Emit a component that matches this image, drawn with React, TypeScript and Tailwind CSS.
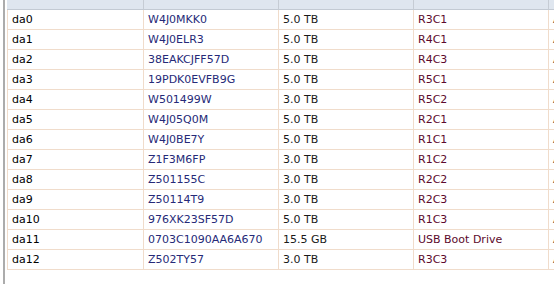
const rows = [
  ["da0", "W4J0MKK0", "5.0 TB", "R3C1"],
  ["da1", "W4J0ELR3", "5.0 TB", "R4C1"],
  ["da2", "38EAKCJFF57D", "5.0 TB", "R4C3"],
  ["da3", "19PDK0EVFB9G", "5.0 TB", "R5C1"],
  ["da4", "W501499W", "3.0 TB", "R5C2"],
  ["da5", "W4J05Q0M", "5.0 TB", "R2C1"],
  ["da6", "W4J0BE7Y", "5.0 TB", "R1C1"],
  ["da7", "Z1F3M6FP", "3.0 TB", "R1C2"],
  ["da8", "Z501155C", "3.0 TB", "R2C2"],
  ["da9", "Z50114T9", "3.0 TB", "R2C3"],
  ["da10", "976XK23SF57D", "5.0 TB", "R1C3"],
  ["da11", "0703C1090AA6A670", "15.5 GB", "USB Boot Drive"],
  ["da12", "Z502TY57", "3.0 TB", "R3C3"],
];

const App = () => {
  return (
    <div
      className="flex w-[554px] h-[284px] overflow-hidden bg-white text-[11px] leading-[18px]"
      style={{ fontFamily: '"DejaVu Sans", Verdana, sans-serif' }}
    >
      <div className="w-[3px] shrink-0" />
      <div className="w-[2px] shrink-0 bg-[#acacac]" />
      <div className="w-[2px] shrink-0" />
      <div className="flex flex-col shrink-0">
        {/* header */}
        <div className="flex h-[10px] bg-[#dfe6ef] border-b border-[#c3cad3]">
          <div className="w-[137px] shrink-0 border-r border-[#c6ccd4]" />
          <div className="w-[135px] shrink-0 border-r border-[#c6ccd4]" />
          <div className="w-[135px] shrink-0 border-r border-[#c6ccd4]" />
          <div className="w-[135px] shrink-0 border-r border-[#c6ccd4]" />
          <div className="w-[40px] shrink-0" />
        </div>
        {rows.map((r) => (
          <div key={r[0]} className="flex h-[20px] border-b border-[#f0dccb] whitespace-nowrap">
            <div className="w-[137px] shrink-0 border-l border-r border-[#f0dccb] pl-[4px] pt-[1px] text-black">
              {r[0]}
            </div>
            <div className="w-[135px] shrink-0 border-r border-[#f0dccb] pl-[4px] pt-[1px] text-[#262a78]">
              {r[1]}
            </div>
            <div className="w-[135px] shrink-0 border-r border-[#f0dccb] pl-[4px] pt-[1px] text-[#1a1a1a]">
              {r[2]}
            </div>
            <div className="w-[135px] shrink-0 border-r border-[#f0dccb] pl-[4px] pt-[1px] text-[#5c0a2c]">
              {r[3]}
            </div>
            <div className="w-[40px] shrink-0 pl-[4px] pt-[1px] text-[#3a3a3a]">Assigned</div>
          </div>
        ))}
      </div>
    </div>
  );
};

export default App;
